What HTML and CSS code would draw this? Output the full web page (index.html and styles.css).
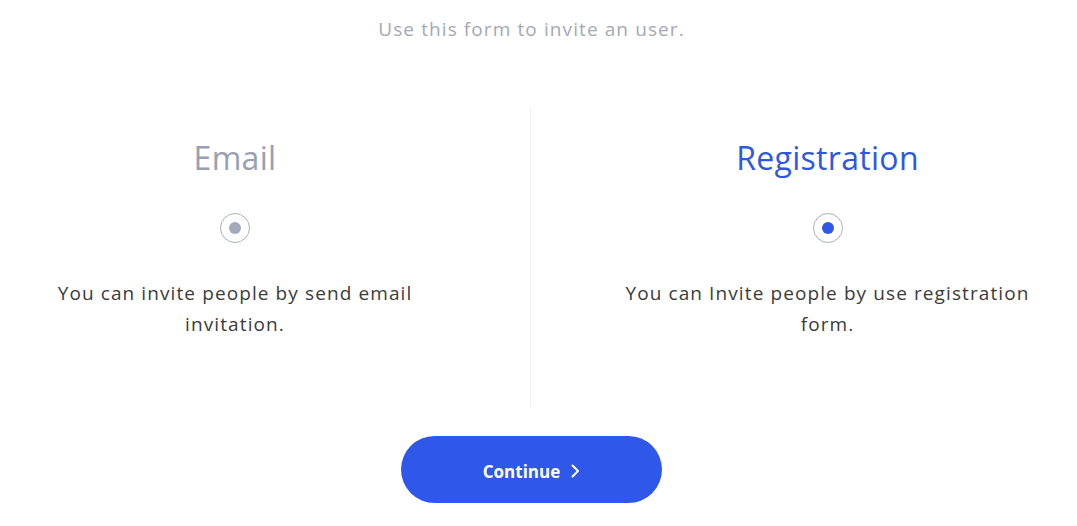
FILE: index.html
```html
<!DOCTYPE html>
<html>
<head>
<meta charset="utf-8">
<link rel="stylesheet" href="styles.css">
</head>
<body>
<p class="subtitle">Use this form to invite an user.</p>
<div class="options">
  <label class="option option-left">
    <span class="title">Email</span>
    <span class="radio"><span class="dot"></span></span>
    <span class="desc">You can invite people by send email invitation.</span>
  </label>
  <label class="option option-right active">
    <span class="title">Registration</span>
    <span class="radio"><span class="dot"></span></span>
    <span class="desc">You can Invite people by use registration form.</span>
  </label>
</div>
<div class="actions">
  <button class="btn">Continue
    <svg width="10" height="14" viewBox="0 0 10 14"><path d="M2.5 1.5 L8 7 L2.5 12.5" fill="none" stroke="#fff" stroke-width="2" stroke-linecap="round" stroke-linejoin="round"/></svg>
  </button>
</div>
</body>
</html>
```
FILE: styles.css
```css
html, body { margin: 0; padding: 0; background: #fff; }
body {
  font-family: "Open Sans", "Noto Sans", sans-serif;
  width: 1077px;
  height: 526px;
  overflow: hidden;
}
.subtitle {
  margin: 14px 0 0;
  padding-right: 14px;
  text-align: center;
  font-size: 19px;
  line-height: 30px;
  color: #a3a9b6;
  letter-spacing: 1.1px;
}
.options {
  display: grid;
  grid-template-columns: 530px 1fr;
  margin-top: 63px;
  height: 300px;
}
.option {
  display: flex;
  flex-direction: column;
  align-items: center;
  padding-top: 31px;
}
.option-left { padding-right: 60px; }
.option-right { padding-left: 47px; border-left: 1px solid #eef0f6; }
.title {
  font-size: 32px;
  line-height: 40px;
  color: #97a0b4;
  font-weight: 400;
  letter-spacing: 0.3px;
}
.active .title { color: #2f58e0; }
.radio {
  margin-top: 35px;
  width: 28px;
  height: 28px;
  border: 1px solid #a9afbf;
  border-radius: 50%;
  display: flex;
  align-items: center;
  justify-content: center;
}
.dot {
  width: 12px;
  height: 12px;
  border-radius: 50%;
  background: #a2a9bc;
}
.active .dot { background: #2f58eb; }
.desc {
  margin-top: 35px;
  width: 420px;
  text-align: center;
  font-size: 19px;
  line-height: 31px;
  color: #3b3b3b;
  letter-spacing: 1.1px;
}
.actions {
  display: flex;
  justify-content: center;
  margin-top: 29px;
  padding-right: 14px;
}
.btn {
  width: 261px;
  height: 67px;
  padding: 3px 0 0;
  border: none;
  border-radius: 34px;
  background: #2f58eb;
  color: #fff;
  font-family: "Open Sans", sans-serif;
  font-weight: 700;
  font-size: 17px;
  display: flex;
  align-items: center;
  justify-content: center;
  gap: 10px;
  cursor: pointer;
}
```
